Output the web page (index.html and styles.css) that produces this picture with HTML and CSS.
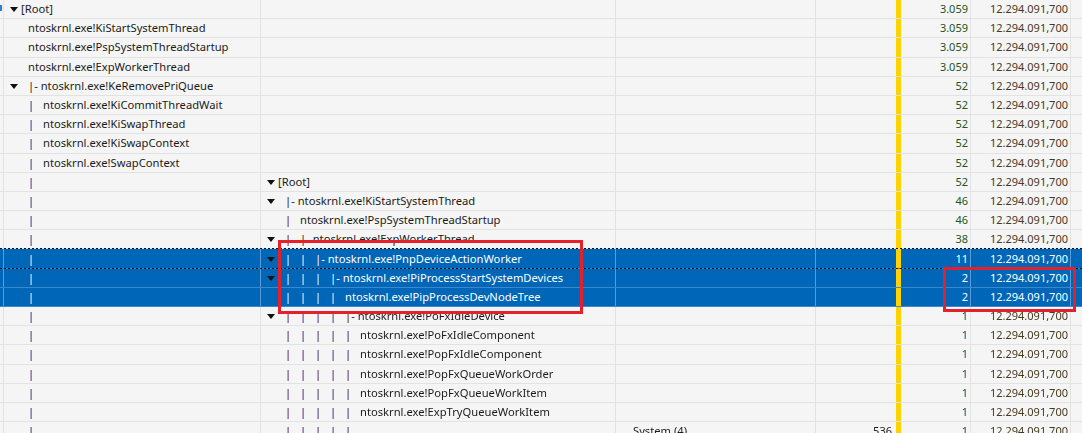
FILE: index.html
```html
<!DOCTYPE html>
<html>
<head>
<meta charset="utf-8">
<link rel="stylesheet" href="styles.css">
</head>
<body>
<div class="grid">
  <div class="row">
    <div class="c c0"><span class="mark"></span></div>
    <div class="c c1 tree"><span class="g r"><i class="tri"></i></span><span class="t">[Root]</span></div>
    <div class="c c2 tree"></div>
    <div class="c c3"></div>
    <div class="c c4 num"></div>
    <div class="c c5"></div>
    <div class="c c6 num cnt">3.059</div>
    <div class="c c7 num big">12.294.091,700</div>
    <div class="c c8"></div>
  </div>
  <div class="row">
    <div class="c c0"></div>
    <div class="c c1 tree"><span class="g"></span><span class="t">ntoskrnl.exe!KiStartSystemThread</span></div>
    <div class="c c2 tree"></div>
    <div class="c c3"></div>
    <div class="c c4 num"></div>
    <div class="c c5"></div>
    <div class="c c6 num cnt">3.059</div>
    <div class="c c7 num big">12.294.091,700</div>
    <div class="c c8"></div>
  </div>
  <div class="row">
    <div class="c c0"></div>
    <div class="c c1 tree"><span class="g"></span><span class="t">ntoskrnl.exe!PspSystemThreadStartup</span></div>
    <div class="c c2 tree"></div>
    <div class="c c3"></div>
    <div class="c c4 num"></div>
    <div class="c c5"></div>
    <div class="c c6 num cnt">3.059</div>
    <div class="c c7 num big">12.294.091,700</div>
    <div class="c c8"></div>
  </div>
  <div class="row">
    <div class="c c0"></div>
    <div class="c c1 tree"><span class="g"></span><span class="t">ntoskrnl.exe!ExpWorkerThread</span></div>
    <div class="c c2 tree"></div>
    <div class="c c3"></div>
    <div class="c c4 num"></div>
    <div class="c c5"></div>
    <div class="c c6 num cnt">3.059</div>
    <div class="c c7 num big">12.294.091,700</div>
    <div class="c c8"></div>
  </div>
  <div class="row">
    <div class="c c0"></div>
    <div class="c c1 tree"><span class="g"><i class="tri"></i></span><span class="t">|- ntoskrnl.exe!KeRemovePriQueue</span></div>
    <div class="c c2 tree"></div>
    <div class="c c3"></div>
    <div class="c c4 num"></div>
    <div class="c c5"></div>
    <div class="c c6 num cnt">52</div>
    <div class="c c7 num big">12.294.091,700</div>
    <div class="c c8"></div>
  </div>
  <div class="row">
    <div class="c c0"></div>
    <div class="c c1 tree"><span class="g"></span><span class="p">|</span><span class="t">ntoskrnl.exe!KiCommitThreadWait</span></div>
    <div class="c c2 tree"></div>
    <div class="c c3"></div>
    <div class="c c4 num"></div>
    <div class="c c5"></div>
    <div class="c c6 num cnt">52</div>
    <div class="c c7 num big">12.294.091,700</div>
    <div class="c c8"></div>
  </div>
  <div class="row">
    <div class="c c0"></div>
    <div class="c c1 tree"><span class="g"></span><span class="p">|</span><span class="t">ntoskrnl.exe!KiSwapThread</span></div>
    <div class="c c2 tree"></div>
    <div class="c c3"></div>
    <div class="c c4 num"></div>
    <div class="c c5"></div>
    <div class="c c6 num cnt">52</div>
    <div class="c c7 num big">12.294.091,700</div>
    <div class="c c8"></div>
  </div>
  <div class="row">
    <div class="c c0"></div>
    <div class="c c1 tree"><span class="g"></span><span class="p">|</span><span class="t">ntoskrnl.exe!KiSwapContext</span></div>
    <div class="c c2 tree"></div>
    <div class="c c3"></div>
    <div class="c c4 num"></div>
    <div class="c c5"></div>
    <div class="c c6 num cnt">52</div>
    <div class="c c7 num big">12.294.091,700</div>
    <div class="c c8"></div>
  </div>
  <div class="row">
    <div class="c c0"></div>
    <div class="c c1 tree"><span class="g"></span><span class="p">|</span><span class="t">ntoskrnl.exe!SwapContext</span></div>
    <div class="c c2 tree"></div>
    <div class="c c3"></div>
    <div class="c c4 num"></div>
    <div class="c c5"></div>
    <div class="c c6 num cnt">52</div>
    <div class="c c7 num big">12.294.091,700</div>
    <div class="c c8"></div>
  </div>
  <div class="row">
    <div class="c c0"></div>
    <div class="c c1 tree"><span class="g"></span><span class="p">|</span></div>
    <div class="c c2 tree"><span class="g r"><i class="tri"></i></span><span class="t">[Root]</span></div>
    <div class="c c3"></div>
    <div class="c c4 num"></div>
    <div class="c c5"></div>
    <div class="c c6 num cnt">52</div>
    <div class="c c7 num big">12.294.091,700</div>
    <div class="c c8"></div>
  </div>
  <div class="row">
    <div class="c c0"></div>
    <div class="c c1 tree"><span class="g"></span><span class="p">|</span></div>
    <div class="c c2 tree"><span class="g"><i class="tri"></i></span><span class="t">|- ntoskrnl.exe!KiStartSystemThread</span></div>
    <div class="c c3"></div>
    <div class="c c4 num"></div>
    <div class="c c5"></div>
    <div class="c c6 num cnt">46</div>
    <div class="c c7 num big">12.294.091,700</div>
    <div class="c c8"></div>
  </div>
  <div class="row">
    <div class="c c0"></div>
    <div class="c c1 tree"><span class="g"></span><span class="p">|</span></div>
    <div class="c c2 tree"><span class="g"></span><span class="p">|</span><span class="t">ntoskrnl.exe!PspSystemThreadStartup</span></div>
    <div class="c c3"></div>
    <div class="c c4 num"></div>
    <div class="c c5"></div>
    <div class="c c6 num cnt">46</div>
    <div class="c c7 num big">12.294.091,700</div>
    <div class="c c8"></div>
  </div>
  <div class="row">
    <div class="c c0"></div>
    <div class="c c1 tree"><span class="g"></span><span class="p">|</span></div>
    <div class="c c2 tree"><span class="g"><i class="tri"></i></span><span class="p">|</span><span class="t">|- ntoskrnl.exe!ExpWorkerThread</span></div>
    <div class="c c3"></div>
    <div class="c c4 num"></div>
    <div class="c c5"></div>
    <div class="c c6 num cnt">38</div>
    <div class="c c7 num big">12.294.091,700</div>
    <div class="c c8"></div>
  </div>
  <div class="row sel focus">
    <div class="c c0"></div>
    <div class="c c1 tree"><span class="g"></span><span class="p">|</span></div>
    <div class="c c2 tree"><span class="g"><i class="tri"></i></span><span class="p">|</span><span class="p">|</span><span class="t">|- ntoskrnl.exe!PnpDeviceActionWorker</span></div>
    <div class="c c3"></div>
    <div class="c c4 num"></div>
    <div class="c c5"></div>
    <div class="c c6 num cnt">11</div>
    <div class="c c7 num big">12.294.091,700</div>
    <div class="c c8"></div>
  </div>
  <div class="row sel">
    <div class="c c0"></div>
    <div class="c c1 tree"><span class="g"></span><span class="p">|</span></div>
    <div class="c c2 tree"><span class="g"><i class="tri"></i></span><span class="p">|</span><span class="p">|</span><span class="p">|</span><span class="t">|- ntoskrnl.exe!PiProcessStartSystemDevices</span></div>
    <div class="c c3"></div>
    <div class="c c4 num"></div>
    <div class="c c5"></div>
    <div class="c c6 num cnt">2</div>
    <div class="c c7 num big">12.294.091,700</div>
    <div class="c c8"></div>
  </div>
  <div class="row sel">
    <div class="c c0"></div>
    <div class="c c1 tree"><span class="g"></span><span class="p">|</span></div>
    <div class="c c2 tree"><span class="g"></span><span class="p">|</span><span class="p">|</span><span class="p">|</span><span class="p">|</span><span class="t">ntoskrnl.exe!PipProcessDevNodeTree</span></div>
    <div class="c c3"></div>
    <div class="c c4 num"></div>
    <div class="c c5"></div>
    <div class="c c6 num cnt">2</div>
    <div class="c c7 num big">12.294.091,700</div>
    <div class="c c8"></div>
  </div>
  <div class="row">
    <div class="c c0"></div>
    <div class="c c1 tree"><span class="g"></span><span class="p">|</span></div>
    <div class="c c2 tree"><span class="g"><i class="tri"></i></span><span class="p">|</span><span class="p">|</span><span class="p">|</span><span class="p">|</span><span class="t">|- ntoskrnl.exe!PoFxIdleDevice</span></div>
    <div class="c c3"></div>
    <div class="c c4 num"></div>
    <div class="c c5"></div>
    <div class="c c6 num cnt">1</div>
    <div class="c c7 num big">12.294.091,700</div>
    <div class="c c8"></div>
  </div>
  <div class="row">
    <div class="c c0"></div>
    <div class="c c1 tree"><span class="g"></span><span class="p">|</span></div>
    <div class="c c2 tree"><span class="g"></span><span class="p">|</span><span class="p">|</span><span class="p">|</span><span class="p">|</span><span class="p">|</span><span class="t">ntoskrnl.exe!PoFxIdleComponent</span></div>
    <div class="c c3"></div>
    <div class="c c4 num"></div>
    <div class="c c5"></div>
    <div class="c c6 num cnt">1</div>
    <div class="c c7 num big">12.294.091,700</div>
    <div class="c c8"></div>
  </div>
  <div class="row">
    <div class="c c0"></div>
    <div class="c c1 tree"><span class="g"></span><span class="p">|</span></div>
    <div class="c c2 tree"><span class="g"></span><span class="p">|</span><span class="p">|</span><span class="p">|</span><span class="p">|</span><span class="p">|</span><span class="t">ntoskrnl.exe!PopFxIdleComponent</span></div>
    <div class="c c3"></div>
    <div class="c c4 num"></div>
    <div class="c c5"></div>
    <div class="c c6 num cnt">1</div>
    <div class="c c7 num big">12.294.091,700</div>
    <div class="c c8"></div>
  </div>
  <div class="row">
    <div class="c c0"></div>
    <div class="c c1 tree"><span class="g"></span><span class="p">|</span></div>
    <div class="c c2 tree"><span class="g"></span><span class="p">|</span><span class="p">|</span><span class="p">|</span><span class="p">|</span><span class="p">|</span><span class="t">ntoskrnl.exe!PopFxQueueWorkOrder</span></div>
    <div class="c c3"></div>
    <div class="c c4 num"></div>
    <div class="c c5"></div>
    <div class="c c6 num cnt">1</div>
    <div class="c c7 num big">12.294.091,700</div>
    <div class="c c8"></div>
  </div>
  <div class="row">
    <div class="c c0"></div>
    <div class="c c1 tree"><span class="g"></span><span class="p">|</span></div>
    <div class="c c2 tree"><span class="g"></span><span class="p">|</span><span class="p">|</span><span class="p">|</span><span class="p">|</span><span class="p">|</span><span class="t">ntoskrnl.exe!PopFxQueueWorkItem</span></div>
    <div class="c c3"></div>
    <div class="c c4 num"></div>
    <div class="c c5"></div>
    <div class="c c6 num cnt">1</div>
    <div class="c c7 num big">12.294.091,700</div>
    <div class="c c8"></div>
  </div>
  <div class="row">
    <div class="c c0"></div>
    <div class="c c1 tree"><span class="g"></span><span class="p">|</span></div>
    <div class="c c2 tree"><span class="g"></span><span class="p">|</span><span class="p">|</span><span class="p">|</span><span class="p">|</span><span class="p">|</span><span class="t">ntoskrnl.exe!ExpTryQueueWorkItem</span></div>
    <div class="c c3"></div>
    <div class="c c4 num"></div>
    <div class="c c5"></div>
    <div class="c c6 num cnt">1</div>
    <div class="c c7 num big">12.294.091,700</div>
    <div class="c c8"></div>
  </div>
  <div class="row">
    <div class="c c0"></div>
    <div class="c c1 tree"><span class="g"></span><span class="p">|</span></div>
    <div class="c c2 tree"><span class="g"></span><span class="p">|</span><span class="p">|</span><span class="p">|</span><span class="p">|</span><span class="p">|</span></div>
    <div class="c c3 tree"><span class="g r"></span><span class="t">System (4)</span></div>
    <div class="c c4 num">536</div>
    <div class="c c5"></div>
    <div class="c c6 num cnt">1</div>
    <div class="c c7 num big">12.294.091,700</div>
    <div class="c c8"></div>
  </div>

  <div class="hl hl1"></div>
  <div class="hl hl2"></div>
</div>
</body>
</html>
```

FILE: styles.css
```css
html, body {
  margin: 0;
  padding: 0;
  width: 1082px;
  height: 433px;
  overflow: hidden;
  background: #f5f5f5;
}

.grid {
  position: relative;
  font-family: "Noto Sans", "Open Sans", sans-serif;
  font-size: 11.2px;
  color: #1b1b1b;
}

.row {
  position: relative;
  display: grid;
  grid-template-columns: 4px 257px 355px 200px 80px 5px 70px 100px 11px;
  height: 19.2px;
  box-sizing: border-box;
  border-bottom: 1px solid #e2e2e2;
}

.c {
  display: flex;
  align-items: center;
  white-space: nowrap;
  overflow: hidden;
  box-sizing: border-box;
  border-right: 1px solid #e2e2e2;
  line-height: 18px;
}

.c4 { border-right: none; }
.c5 { background: #ffd200; border-right: none; }
.c8 { border-right: none; }

.num {
  justify-content: flex-end;
  font-size: 11px;
}
.c4.num { padding-right: 4px; }
.cnt { padding-right: 2px; color: #1d561f; }
.big { padding-right: 2px; color: #463a1e; }

.mark {
  display: block;
  width: 2px;
  height: 6px;
  background: #2a7fd4;
  margin-top: -2px;
}

.g {
  flex: none;
  width: 24px;
  height: 18px;
  display: flex;
  align-items: center;
  box-sizing: border-box;
  padding-left: 6px;
}
.g.r { width: 17px; }

.tri {
  display: block;
  width: 0;
  height: 0;
  border-left: 4px solid transparent;
  border-right: 4px solid transparent;
  border-top: 5px solid #111;
  margin-top: 1px;
}

.p {
  flex: none;
  display: block;
  width: 15px;
  color: #2e0852;
  will-change: transform;
}

.t {
  flex: none;
}

.row.sel {
  background: #0066b7;
  border-bottom-color: #3d88cc;
}
.row.sel .c {
  color: #fff;
  border-right-color: #5a9bd6;
}
.row.sel .c4,
.row.sel .c5,
.row.sel .c8 { border-right: none; }
.row.sel .p { color: #fff; }

.row.focus::after {
  content: "";
  position: absolute;
  left: 0;
  right: 0;
  top: -1px;
  bottom: -1px;
  background-image:
    repeating-linear-gradient(90deg, #111 0 2px, transparent 2px 4px),
    repeating-linear-gradient(90deg, #111 0 2px, transparent 2px 4px);
  background-size: 100% 1px, 100% 1px;
  background-position: 0 0, 0 100%;
  background-repeat: no-repeat;
  pointer-events: none;
}

.hl {
  position: absolute;
  border: 3px solid #e5202b;
  box-sizing: border-box;
  pointer-events: none;
}
.hl1 { left: 278px; top: 240px; width: 305px; height: 74px; }
.hl2 { left: 943px; top: 267px; width: 133px; height: 45px; }
```
